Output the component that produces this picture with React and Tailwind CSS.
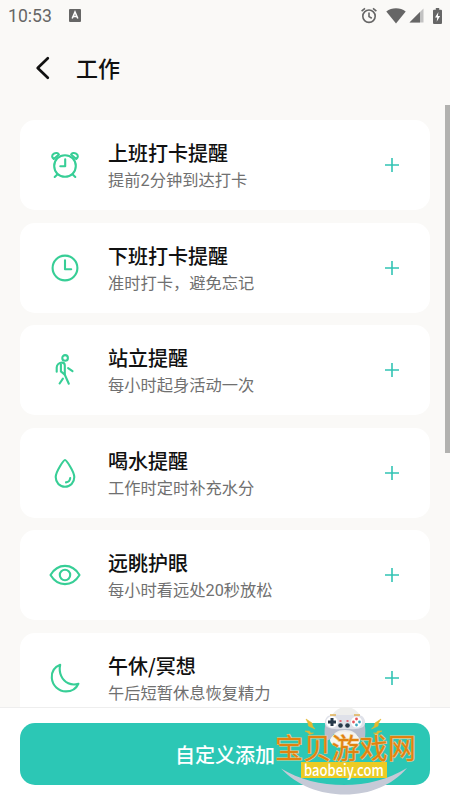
const reminders = [
  { icon: AlarmIcon, title: "上班打卡提醒", desc: "提前2分钟到达打卡" },
  { icon: ClockIcon, title: "下班打卡提醒", desc: "准时打卡，避免忘记" },
  { icon: WalkIcon, title: "站立提醒", desc: "每小时起身活动一次" },
  { icon: DropIcon, title: "喝水提醒", desc: "工作时定时补充水分" },
  { icon: EyeIcon, title: "远眺护眼", desc: "每小时看远处20秒放松" },
  { icon: MoonIcon, title: "午休/冥想", desc: "午后短暂休息恢复精力" },
];

function LineIcon({ children }) {
  return (
    <svg
      viewBox="0 0 34 34"
      className="h-[34px] w-[34px] shrink-0"
      fill="none"
      stroke="#37ce96"
      strokeWidth="2.1"
      strokeLinecap="round"
      strokeLinejoin="round"
    >
      {children}
    </svg>
  );
}

function AlarmIcon() {
  return (
    <LineIcon>
      <circle cx="17" cy="18" r="10.8" />
      <path d="M17.2 11.3V18.3h-4.9" />
      <path d="M9.3 26.5 6.7 29M24.7 26.5l2.6 2.5" />
      <path d="M5.8 11C3.5 9.6 3.7 7 5.900 5.600c2-1.200 4.400-.700 5 .900L5.800 11ZM28.200 11c2.300-1.400 2.100-4-.100-5.400-2-1.200-4.400-.700-5 .900L28.200 11Z" />
    </LineIcon>
  );
}

function ClockIcon() {
  return (
    <LineIcon>
      <circle cx="17" cy="17" r="12.4" />
      <path d="M17 9.300v8.900h6.200" />
    </LineIcon>
  );
}

function WalkIcon() {
  return (
    <LineIcon>
      <circle cx="17.1" cy="4.9" r="2.8" />
      <path d="M8.700 18.700v-4.100c0-3.100 2.500-5 5.400-5 2 0 2.700 1.200 2.700 2.800v9.300l-3.900-3.300V10" />
      <path d="M20.100 15.200l4.400 2.900M16.800 21.700l4 9M14.900 25.700l-3.300 4.800" />
    </LineIcon>
  );
}

function DropIcon() {
  return (
    <LineIcon>
      <path d="M17 4c-1.200 0-9.300 11.500-9.300 17.100 0 5.600 4 9.700 9.300 9.700s9.300-4.100 9.300-9.700C26.300 15.500 18.200 4 17 4Z" />
      <path d="M22.200 22c-.2 2.500-1.800 4.100-4.200 4.400" />
    </LineIcon>
  );
}

function EyeIcon() {
  return (
    <LineIcon>
      <path d="M2.500 17C6.100 11 11.200 7.900 17 7.900S27.900 11 31.500 17C27.900 23 22.800 26.100 17 26.100S6.100 23 2.500 17Z" />
      <circle cx="17" cy="17" r="5.200" />
    </LineIcon>
  );
}

function MoonIcon() {
  return (
    <LineIcon>
      <path d="M12.200 3.700C6.800 5.800 3.300 10.700 3.800 17c.6 7.300 6.600 13.400 14.200 13.400 5.900 0 10.300-3 12.400-7.700-3.200 1-6.700 1.100-10.100-.5-6.400-2.900-9.900-10.500-8.100-18.500Z" />
    </LineIcon>
  );
}

function StatusBar() {
  return (
    <div className="flex h-[31px] items-center justify-between pl-2 pr-[8px] text-[#666]">
      <div className="flex items-center">
        <span className="pt-px font-[Roboto] text-[17.6px] leading-[30px]">10:53</span>
        <svg viewBox="0 0 12 13" className="ml-[17px] h-[13px] w-[12px]">
          <rect width="12" height="13" rx="1" fill="#666" />
          <path d="M3.200 9.500 6 3l2.800 6.500M4.200 7.500h3.600" fill="none" stroke="#fff" strokeWidth="1.6" />
        </svg>
      </div>
      <div className="flex items-center">
        <svg viewBox="0 0 16 17" className="h-[17px] w-[16px]" fill="none" stroke="#666" strokeWidth="1.6">
          <circle cx="8" cy="9.2" r="6.2" />
          <path d="M8 5.500v4.100l2.800 1.700M.6 4.200 4 1.300M15.400 4.200 12 1.300" />
        </svg>
        <svg viewBox="0 0 20 16" className="ml-[9px] h-[16px] w-[20px]" fill="#666">
          <path d="M10 15.500.3 3.600C3.100 1.400 6.400.3 10 .3s6.900 1.100 9.700 3.300Z" />
        </svg>
        <svg viewBox="0 0 15 15" className="ml-[3px] h-[15px] w-[15px]">
          <path d="M14.500.5v14H.5Z" fill="#c2c2c2" />
          <path d="M11 4v10.500H.5Z" fill="#666" />
        </svg>
        <svg viewBox="0 0 9 16" className="ml-[9px] h-[16px] w-[9px]">
          <path d="M2.800 0h3.400v1.700H8q1 0 1 1V15q0 1-1 1H1q-1 0-1-1V2.700q0-1 1-1h1.800Z" fill="#666" />
          <path d="M5.400 4 2 9.500h2.200L3.700 13.700 7.100 8H4.900Z" fill="#fff" />
        </svg>
      </div>
    </div>
  );
}

function ReminderCard({ icon: Icon, title, desc }) {
  return (
    <div className="flex h-[90px] shrink-0 items-center rounded-[15px] bg-white pl-[28px] pr-[30px]">
      <Icon />
      <div className="ml-[26px] flex-1 pt-[3px]">
        <div className="text-[20px] font-medium leading-[28px] text-[#111]">{title}</div>
        <div className="font-[Roboto,'Noto_Sans_CJK_SC',sans-serif] text-[16.25px] leading-[27px] text-[#707070]">
          {desc}
        </div>
      </div>
      <svg viewBox="0 0 16 16" className="h-4 w-4" stroke="#32c4b4" strokeWidth="1.6">
        <path d="M8 1v14M1 8h14" />
      </svg>
    </div>
  );
}

function Watermark() {
  return (
    <div className="absolute left-[270px] top-[702px] h-[98px] w-[150px]">
      <svg viewBox="0 0 150 98" className="absolute inset-0 h-full w-full">
        <circle cx="76" cy="21" r="16" fill="#eeeeec" />
        <ellipse cx="75" cy="38" rx="15" ry="8" fill="#f7f5ef" />
        <path d="M11 66.500c18 11 40 16.500 63 16.500s44-5.500 63-17c-15 17.500-37 26.500-62 26.500S27 83.500 11 66.500Z" fill="#c6cad7" />
        <path
          d="m36 17 6 4 .5 3 2.500 3-6.500-3-.5-3ZM111 17l-6 4-.5 3-3 3 6.500-3 .5-3ZM35 29l4.500 0 1 2h3l-4 1.500-1.500-2ZM112 29l-4.500 0-1 2h-3l4 1.500 1.500-2Z"
          fill="#e5b82e"
          stroke="#e5b82e"
          strokeWidth=".6"
        />
        <path d="M57 17c-2 4-3 12-2 18 1 4 4 4 6 1 3-5 6-8 14-8s11 3 14 8c2 3 5 3 6-1 1-6 0-14-2-18Z" fill="#b9bdcc" />
        <path d="M58 14c4-2 10-1 17-1s13-1 17 1c4 3 4 9 1 11-5 3-11 2-18 2s-13 1-18-2c-3-2-3-8 1-11Z" fill="#dfe1e9" />
        <path d="M60 13h6M84 13h6" stroke="#e2b354" strokeWidth="1.6" />
        <circle cx="62" cy="20" r="5.8" fill="#fff" />
        <path d="M62 16v8M58 20h8" stroke="#263849" strokeWidth="3" />
        <circle cx="86.5" cy="20" r="5.5" fill="#fff" />
        <g fill="#e5535b">
          <circle cx="86.5" cy="17" r="1.4" />
          <circle cx="83.5" cy="20" r="1.4" />
        </g>
        <g fill="#3ca4bd">
          <circle cx="89.5" cy="20" r="1.4" />
          <circle cx="86.5" cy="23" r="1.4" />
        </g>
        <circle cx="70.5" cy="23.5" r="2.3" fill="#26394a" />
        <circle cx="77.5" cy="23.5" r="2.3" fill="#26394a" />
        <path d="M69.500 19h2M76.500 19h2" stroke="#df4554" strokeWidth="1.5" />
      </svg>
      <div className="absolute left-[5px] top-[29px] whitespace-nowrap text-[28.2px] leading-[31px] text-[#e2820f] [paint-order:stroke_fill] [-webkit-text-stroke:1.2px_#edc987]">
        宝贝游戏网
      </div>
      <div className="absolute left-[31px] top-[60px] flex h-[16px] w-[86px] items-center justify-center bg-[#eccb24]">
        <span className="scale-x-[0.87] text-[15px] font-medium leading-[16px] text-white">baobeiy.com</span>
      </div>
    </div>
  );
}

export default function App() {
  return (
    <div className="relative flex h-[800px] w-[450px] flex-col overflow-hidden bg-[#faf9f7] font-['Noto_Sans_CJK_SC',sans-serif]">
      <StatusBar />

      <header className="flex h-[74px] shrink-0 items-center pl-[35px]">
        <svg viewBox="0 0 16 24" className="h-6 w-4" fill="none" stroke="#111" strokeWidth="2.7" strokeLinecap="round" strokeLinejoin="round">
          <path d="M12.800 2.300 2.700 12l10.100 9.700" />
        </svg>
        <h1 className="mb-[2px] ml-[25px] text-[22px] font-medium text-[#111]">工作</h1>
      </header>

      <main className="flex min-h-0 flex-1 justify-between overflow-hidden pl-5">
        <div className="flex w-[410px] flex-col gap-[12.5px] pt-[15px]">
          {reminders.map((item) => (
            <ReminderCard key={item.title} {...item} />
          ))}
        </div>
        {/* scrollbar */}
        <div className="h-[348px] w-[5px] bg-[#b2b2b0]" />
      </main>

      <footer className="h-[93px] shrink-0 border-t border-[#eeeeee] bg-white px-5 pt-[15px]">
        <button className="block h-[62px] w-full rounded-[15px] bg-[#2cc7b5] pt-px text-[20px] font-medium text-white">
          自定义添加
        </button>
      </footer>

      <Watermark />
    </div>
  );
}
